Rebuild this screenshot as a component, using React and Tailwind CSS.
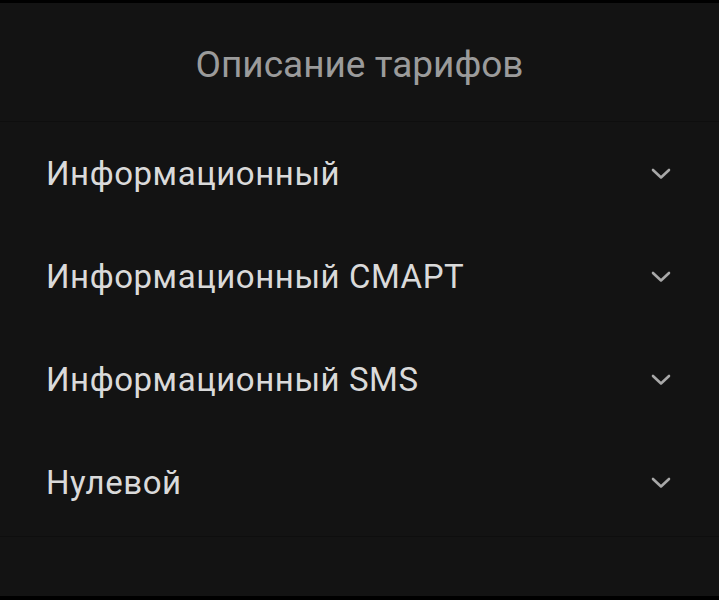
import React from "react";

const items = [
  "Информационный",
  "Информационный СМАРТ",
  "Информационный SMS",
  "Нулевой",
];

function Chevron() {
  return (
    <svg width="22" height="14" viewBox="0 0 22 14" fill="none" className="shrink-0">
      <path d="M3 3 L11 10.5 L19 3" stroke="#a8a8a8" strokeWidth="2.6" strokeLinecap="round" strokeLinejoin="round" />
    </svg>
  );
}

export default function App() {
  return (
    <div className="w-[719px] h-[600px] bg-black pt-[3px] pb-[4px] flex" style={{ fontFamily: "Roboto, 'Noto Sans', sans-serif" }}>
      <div className="flex-1 bg-[#131313] flex flex-col">
        <div className="h-[119px] flex items-center justify-center border-b border-[#0e0e0e]">
          <span className="text-[37px] text-[#9b9b9b] mt-[5px]">Описание тарифов</span>
        </div>
        {items.map((t) => (
          <div key={t} className="h-[103px] flex items-center justify-between pl-[46px] pr-[47px]">
            <span className="text-[33px] text-[#dadada] tracking-[0.55px]">{t}</span>
            <Chevron />
          </div>
        ))}
        <div className="mt-[2px] border-t border-[#0e0e0e]" />
      </div>
    </div>
  );
}
